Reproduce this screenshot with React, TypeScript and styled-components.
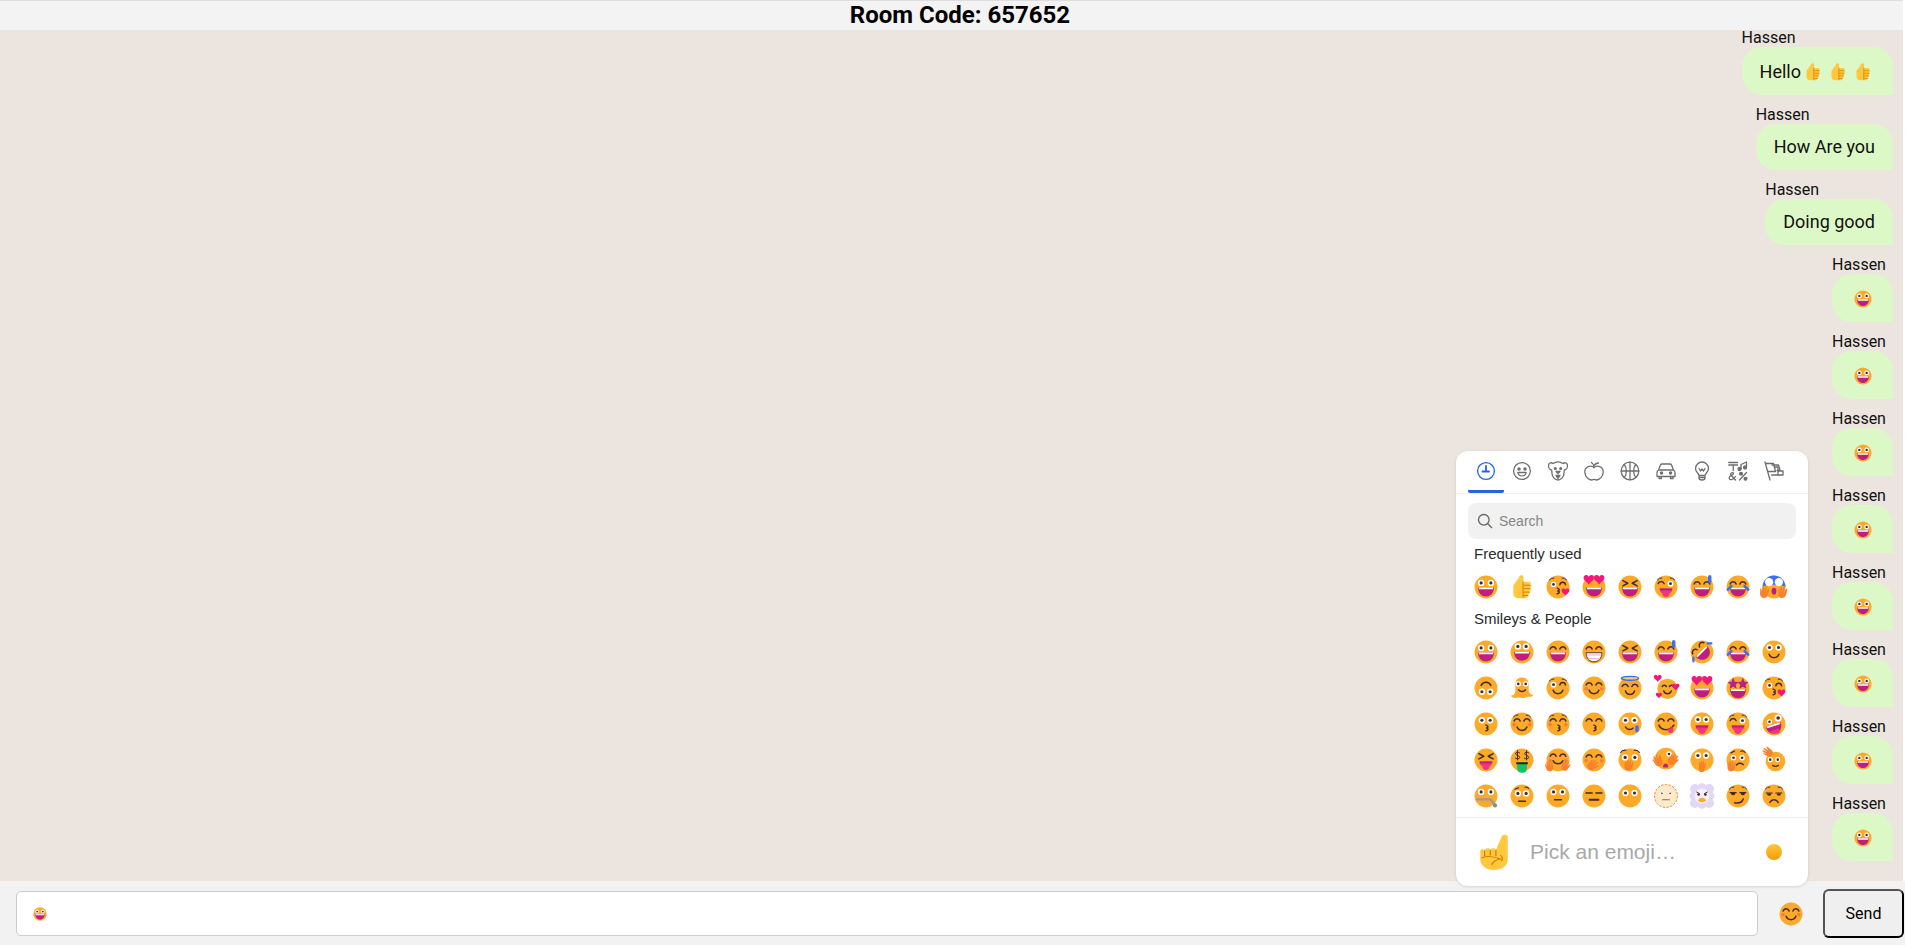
import React from "react";
import styled, { createGlobalStyle } from "styled-components";

const Global = createGlobalStyle`
  html, body { margin: 0; padding: 0; background: #fff; overflow: hidden; }
  * { box-sizing: border-box; }
`;

const Page = styled.div`
  position: relative;
  width: 1905px;
  height: 945px;
  display: flex;
  flex-direction: column;
  overflow: hidden;
  font-family: Roboto, "Liberation Sans", sans-serif;
`;
const Header = styled.header`
  position: relative;
  z-index: 1;
  flex: 0 0 30px;
  margin-right: 2px;
  background: #f3f3f3;
  border-top: 1px solid #dedede;
  padding-left: 17px;
  text-align: center;
  font-size: 24px;
  line-height: 29px;
  font-weight: 700;
  color: #000;
`;
const Chat = styled.main`
  flex: 1;
  min-height: 0;
  margin-right: 2px;
  background: #ece5df;
  padding-right: 10px;
  display: flex;
  flex-direction: column;
  align-items: flex-end;
`;
const Messages = styled.div`
  margin-top: -2px;
  display: flex;
  flex-direction: column;
  align-items: flex-end;
  gap: 10px;
`;
const Message = styled.div`
  display: flex;
  flex-direction: column;
  align-items: flex-start;
`;
const Sender = styled.div`
  font-size: 16px;
  line-height: 19px;
  color: #111;
`;
const Bubble = styled.div`
  background: #dcf8c6;
  border-radius: 20px 20px 0 20px;
  padding: 12px 18px;
  font-size: 18px;
  line-height: 22px;
  color: #111;
  display: flex;
  align-items: center;
`;
const BubbleText = styled.span<{ $withEmoji: boolean }>`
  padding-top: ${p => (p.$withEmoji ? "2px" : "0")};
  margin-right: ${p => (p.$withEmoji ? "-1px" : "0")};
`;
const InlineEmoji = styled.span`
  display: inline-flex;
  width: 18px;
  height: 24px;
  align-items: center;
  margin: 0 3.5px;
  padding-top: 1px;
`;
const Footer = styled.footer`
  flex: 0 0 64px;
  background: #f2f2f2;
  display: flex;
  align-items: center;
  padding-left: 16px;
`;
const InputBox = styled.div`
  flex: 1;
  height: 45px;
  background: #fff;
  border: 1px solid #ccc;
  border-radius: 5px;
  padding: 1px 0 0 16px;
  display: flex;
  align-items: center;
`;
const SmileButton = styled.div`
  width: 24px;
  height: 24px;
  margin: 2px 20px 0 21px;
`;
const SendButton = styled.button`
  width: 81px;
  height: 49px;
  margin-right: 1px;
  background: #efefef;
  border: 2px outset #000;
  border-radius: 6px;
  font-family: Roboto, sans-serif;
  font-size: 16px;
  color: #000;
`;

/* picker */
const Picker = styled.aside`
  position: absolute;
  left: 1456px;
  top: 451px;
  width: 352px;
  height: 435px;
  background: #fff;
  border-radius: 12px;
  box-shadow: 0 1px 3px rgba(0,0,0,.13);
  display: flex;
  flex-direction: column;
  font-family: "Liberation Sans", Arial, sans-serif;
  z-index: 2;
`;
const Tabs = styled.nav`
  height: 43px;
  flex: none;
  display: flex;
  padding: 0 12px;
  border-bottom: 1px solid #f1f1f1;
`;
const Tab = styled.div<{ $active?: boolean }>`
  width: 36px;
  height: 42px;
  display: flex;
  align-items: center;
  justify-content: center;
  padding-top: 1px;
  border-bottom: 3px solid ${p => (p.$active ? "#2264e5" : "transparent")};
  border-radius: 0 0 2px 2px;
  color: ${p => (p.$active ? "#2264e5" : "#6e6e6e")};
`;
const Search = styled.div`
  flex: none;
  margin: 9px 12px 0;
  height: 36px;
  background: #f1f1f1;
  border-radius: 8px;
  display: flex;
  align-items: center;
  gap: 6px;
  padding-left: 9px;
  font-size: 14px;
  color: #868686;
`;
const List = styled.div`
  flex: 1;
  padding: 1px 0 0 12px;
  overflow: hidden;
`;
const Label = styled.div`
  height: 29px;
  line-height: 28px;
  padding-left: 6px;
  font-size: 15px;
  color: #2b2b2b;
`;
const Grid = styled.div`
  display: grid;
  grid-template-columns: repeat(9, 36px);
  grid-auto-rows: 36px;
  place-items: center;
`;
const Preview = styled.div`
  flex: none;
  height: 69px;
  border-top: 1px solid #f1f1f1;
  display: flex;
  align-items: center;
  padding-left: 23px;
`;
const PreviewText = styled.div`
  margin-left: 21px;
  width: 236px;
  font-size: 21px;
  color: #a8a8a8;
`;
const ToneDot = styled.div`
  width: 16px;
  height: 16px;
  border-radius: 50%;
  background: linear-gradient(#ffc83d, #f59b08);
`;

/* emoji drawing */
const DK = "#402a32";
const Face = () => <circle cx="16" cy="16" r="15.3" fill="#fdaa29" />;
const Eye = ({ x, y = 10.5, r = 3.5, c }: { x: number; y?: number; r?: number; c?: string }) => (
  <g><circle cx={x} cy={y} r={r * 1.2} fill="#fff" /><circle cx={x} cy={y} r={r * 0.6} fill={c || DK} /></g>
);
const Eyes = ({ y = 10.5, r = 3.5, dx = 6.5 }: { y?: number; r?: number; dx?: number }) => (
  <g><Eye x={16 - dx} y={y} r={r} /><Eye x={16 + dx} y={y} r={r} /></g>
);
const S = ({ d, w = 2, c = DK }: { d: string; w?: number; c?: string }) => (
  <path d={d} fill="none" stroke={c} strokeWidth={w} strokeLinecap="round" strokeLinejoin="round" />
);
const Arc = ({ x, y = 12 }: { x: number; y?: number }) => <S d={`M${x - 4} ${y}a4.2 4.2 0 0 1 8 0`} />;
const Arcs = ({ y = 12 }: { y?: number }) => <g><Arc x={9.5} y={y} /><Arc x={22.5} y={y} /></g>;
const XEyes = () => <g><S d="M6.5 7.5l6.5 3.5-6.5 3.5" /><S d="M25.5 7.5l-6.5 3.5 6.5 3.5" /></g>;
const Open = ({ y = 16.5 }: { y?: number }) => (
  <g>
    <path d={`M5.5 ${y}H26.5C26.5 ${y + 8} 21.5 ${y + 12} 16 ${y + 12}S5.5 ${y + 8} 5.5 ${y}Z`} fill="#bc1f80" />
    <path d={`M6.4 ${y}H25.6L25.2 ${y + 2.4}H6.8Z`} fill="#fff" />
  </g>
);
const Smile = () => <S d="M9.5 19C12 25 20 25 22.5 19" />;
const Flat = ({ y = 22 }: { y?: number }) => <S d={`M11.5 ${y}H20.5`} w={2.2} />;
const Tongue = ({ x = 16, y = 18, r = 0 }: { x?: number; y?: number; r?: number }) => (
  <g transform={`rotate(${r} ${x} ${y})`}>
    <path d={`M${x - 8.5} ${y}H${x + 8.5}C${x + 8} ${y + 5} ${x + 6} ${y + 6} ${x + 5} ${y + 6}C${x + 5} ${y + 13} ${x - 5} ${y + 13} ${x - 5} ${y + 6}C${x - 6} ${y + 6} ${x - 8} ${y + 5} ${x - 8.5} ${y}Z`} fill="#f5337e" />
    <path d={`M${x - 8.5} ${y}H${x + 8.5}L${x + 8} ${y + 2.5}H${x - 8}Z`} fill="#bc1f80" />
  </g>
);
const Pucker = () => <S d="M16 17.5c3.4 1 3.4 3.2 .8 3.8 2.6.6 2.6 3.2-.8 3.8" />;
const Heart = ({ x, y, s = 1, c = "#f8137f" }: { x: number; y: number; s?: number; c?: string }) => (
  <path transform={`translate(${x} ${y}) scale(${s})`} d="M0 3.6C-1.5 1-5.5-.6-5.5-3.6-5.5-6.8-1.2-7.2 0-4.4 1.2-7.2 5.5-6.8 5.5-3.6 5.5-.6 1.5 1 0 3.6Z" fill={c} />
);
const Blush = () => <g fill="#f4743c" opacity=".85"><circle cx="5.5" cy="17" r="2.4" /><circle cx="26.5" cy="17" r="2.4" /></g>;
const Brows = () => <S d="M4.5 6.5a6 6 0 0 1 6-2.5M21.5 4a6 6 0 0 1 6 2.5" w={1.3} />;
const Hand = ({ x, y, r = 0, s = 1 }: { x: number; y: number; r?: number; s?: number }) => (
  <path transform={`translate(${x} ${y}) rotate(${r}) scale(${s})`} d="M-5 2V-4C-5-5-3.6-5-3.6-4V-1L-2.6-6C-2.4-7-1-7-1-6V-1.5L.4-6.4C.7-7.3 2-7 1.9-6L1-1 3-4C3.6-4.8 4.8-4.2 4.4-3.3L3 2C2 6-3.6 6.4-5 2Z" fill="#f9812c" />
);
const Thumb = () => (
  <g transform="translate(-6 -2.5) scale(1.3 1.15)">
    <path d="M8 14L13.5 6C14 3 15.5 2 17 2.5 19 3.2 18.8 6 18 10H24C26 10 26.5 12 25.5 13 27 14 26.8 16 25.4 17 26.6 18.4 26 20 24.8 20.6 25.6 22.2 25 24 23.6 24.4 24 26.6 22.5 29 20 29H13C10 29 8 27 8 24Z" fill="#ffc83d" />
    <S d="M18.5 14H25M18.5 18H25M18.5 22H24.5M18.5 26H23M18 10V28" w={1} c="#d67d00" />
  </g>
);

const E: Record<string, React.ReactNode> = {
  grin: <><Face /><Eyes /><Open /></>,
  smiley: <><Face /><Eyes y={8.5} r={3.6} dx={5.5} /><Open y={15.5} /></>,
  smileEyes: <><Face /><Arcs /><Open /></>,
  beam: <><Face /><Arcs /><path d="M5.5 17H26.5C26.5 25 21.5 29 16 29S5.5 25 5.5 17Z" fill="#fff" stroke={DK} strokeWidth="1.2" /><path d="M6 20H26M8 25H24" stroke="#e9a6c8" strokeWidth="1.3" /></>,
  squint: <><Face /><XEyes /><Open /></>,
  sweat: <><Face /><Arcs /><Open /><rect x="24" y="0" width="4.6" height="10.5" rx="2.3" fill="#3f6ff0" /></>,
  rofl: <><Face /><g transform="rotate(-45 16 16)"><Arcs y={9} /><Open y={14.5} /></g><rect x="22" y="3" width="8" height="3" rx="1.5" fill="#3f6ff0" /><rect x="3" y="22" width="3" height="8" rx="1.5" fill="#3f6ff0" /></>,
  joy: <><Face /><Arcs /><Open /><path d="M2.5 19.5L7 15M29.5 19.5L25 15" stroke="#3f6ff0" strokeWidth="3.6" strokeLinecap="round" /></>,
  slight: <><Face /><Eyes y={10} dx={6} /><Smile /></>,
  upside: <><Face /><S d="M9.5 12.5C12 7 20 7 22.5 12.5" /><Eyes y={21} dx={5.5} /></>,
  melt: <><path d="M6 24C8 20 7 14 7 12 7 5 11 2 16 2S25 5 25 12C25 17 24 20 27 24 30 25 32.5 26 30 27 26 28.5 24 27 20 29 16 30.5 13 28 9 29 5 30-.5 27 2 26 4 25.5 5 25 6 24Z" fill="#fdaa29" /><Eyes y={10.5} r={3} dx={5} /><S d="M11.5 18.5C14 21.5 18 21.5 20.5 18.5" /></>,
  wink: <><Face /><Eye x={10} y={11.5} r={3.2} /><S d="M18.5 12a3.8 3.8 0 0 1 7.5 0" /><Brows /><Smile /></>,
  blush: <><Face /><Blush /><Arcs /><Smile /></>,
  halo: <><Face /><Arcs y={14} /><S d="M10 20C12 26 20 26 22 20" /><ellipse cx="16" cy="3" rx="11.5" ry="2.6" fill="#fdcc6a" stroke="#2f6ff0" strokeWidth="1.8" /></>,
  hearts: <><circle cx="18" cy="17" r="13.5" fill="#fdaa29" /><S d="M11 14a3.2 3.2 0 0 1 5.5 0M20.5 14a3.2 3.2 0 0 1 5.5 0" /><S d="M13 20C15 25 21 25 23 20" /><Heart x={5} y={4.5} s={.95} /><Heart x={29} y={16} s={.9} /><Heart x={6.5} y={27} s={.75} /></>,
  heartEyes: <><Face /><Heart x={9} y={8} s={1.25} /><Heart x={23} y={8} s={1.25} /><Open /></>,
  star: <><Face /><path d="M9.5 2L11.8 7.5 17 8 13 11.8 14.2 17 9.5 14.2 4.8 17 6 11.8 2 8 7.2 7.5Z" fill="#b3257e" /><path d="M22.5 2L24.8 7.5 30 8 26 11.8 27.2 17 22.5 14.2 17.8 17 19 11.8 15 8 20.2 7.5Z" fill="#b3257e" /><Open y={17.5} /></>,
  kissHeart: <><Face /><Eye x={10} y={12.5} r={3} /><S d="M18.5 13a3.8 3.8 0 0 1 7.5 0" /><S d="M15 17.5c3.4 1 3.4 3.2 .8 3.8 2.6.6 2.6 3.2-.8 3.8" /><Brows /><Heart x={26} y={24} s={.95} /></>,
  kiss: <><Face /><Eyes y={11} dx={5.5} /><Pucker /></>,
  relaxed: <><Face /><Blush /><Arcs /><S d="M9.5 20C12 26 20 26 22.5 20" /><Brows /></>,
  kissClosed: <><Face /><Blush /><Arcs /><Pucker /><Brows /></>,
  kissFlat: <><Face /><Arcs /><Pucker /></>,
  tear: <><Face /><Eyes y={11} dx={6} /><S d="M10 20C12 24 18 24 20 21.5" /><rect x="23" y="17.5" width="4.6" height="9.5" rx="2.3" fill="#3f6ff0" /></>,
  yum: <><Face /><Arcs /><S d="M6.5 17.5C10 25 20 26 26.5 17.5" /><path d="M18 23C20 22.5 22 21.5 23.5 20 27.5 22 26 29 21.5 28 19.5 27.7 18.5 25.5 18 23Z" fill="#f5337e" /></>,
  tongue: <><Face /><Eyes y={10} dx={5.5} /><Tongue /></>,
  winkTongue: <><Face /><Arc x={9.5} y={11.5} /><Eye x={22} y={11.5} r={3.2} /><Brows /><Tongue /></>,
  zany: <><Face /><Eye x={10} y={13} r={2.8} /><Eye x={21.5} y={8} r={4} /><g transform="rotate(-18 16 20)"><Open y={16.5} /></g><path d="M10 26L22 22 24 27C20 30 14 30 10 26Z" fill="#f5337e" /></>,
  squintTongue: <><Face /><XEyes /><Tongue /></>,
  money: <><Face /><S d="M13 6.5C12 5 7.5 5 7.5 7.5S13 10 13 12.5 8 15 7 13.5M10 3.5V16" w={1.3} /><S d="M25 6.5C24 5 19.5 5 19.5 7.5S25 10 25 12.5 20 15 19 13.5M22 3.5V16" w={1.3} /><path d="M9.5 19.5H22.5V27C22.5 32 19 33 16 33S9.5 32 9.5 27Z" fill="#10c46a" /><path d="M8 19H24L23.5 21.5H8.5Z" fill="#1c2a24" /></>,
  hug: <><Face /><Blush /><Arcs y={11} /><S d="M9.5 17C12 22.5 20 22.5 22.5 17" /><Hand x={5.5} y={25} r={-20} s={1.15} /><Hand x={26.5} y={25} r={20} s={1.15} /></>,
  handMouth: <><Face /><Blush /><Arcs /><Hand x={14} y={24} r={45} s={1.3} /></>,
  peek: <><Face /><Eyes y={12.5} dx={6.5} /><S d="M3.5 6a7 7 0 0 1 7-3M21.5 3a7 7 0 0 1 7 3" w={1.5} /><Hand x={15} y={24} r={5} s={1.25} /></>,
  cover: <><circle cx="16" cy="14" r="14.5" fill="#fdaa29" /><Eye x={20} y={8} r={3} /><path d="M12.5 26a3.5 3.5 0 1 1 6 0Z" fill="#bc1f80" /><Hand x={6.5} y={17} r={-35} s={1.3} /><Hand x={25.5} y={17} r={35} s={1.3} /></>,
  shush: <><Face /><Eyes y={10} dx={5.5} /><rect x="12" y="19" width="7" height="13" rx="3.5" fill="#f9812c" /><Hand x={17} y={24} s={1} /></>,
  think: <><Face /><Eye x={10} y={13} r={3} /><Eye x={21.5} y={13} r={3} /><S d="M6.5 6.5L11.5 4M19.5 4.5a4.5 4.5 0 0 1 6 1.5" w={1.5} /><S d="M14 22.5C16.5 20 20 20 23 22" /><Hand x={8} y={25} s={1.2} /></>,
  salute: <><circle cx="18" cy="18" r="13" fill="#fdaa29" /><Eyes y={15.5} r={2.8} dx={5} /><S d="M14 23C16 25 20 25 22 23" w={1.5} /><Hand x={9} y={5} r={-65} s={1.2} /></>,
  zipper: <><Face /><Eyes y={10.5} /><S d="M4 20.5H22L27 27" w={3.2} c="#9a9a9a" /><circle cx="28" cy="28.5" r="2.8" fill="#8a8a8a" /></>,
  brow: <><Face /><Eyes y={12.5} dx={5.5} /><S d="M6.5 7L11.5 5M20 4.5a4.5 4.5 0 0 1 5 1.5" w={1.4} /><Flat y={23} /></>,
  neutral: <><Face /><Eyes y={10.5} dx={6} /><Flat y={21} /></>,
  express: <><Face /><S d="M5.5 12H13.5M18.5 12H26.5" w={2.2} /><S d="M10 21H22" w={2.4} /></>,
  noMouth: <><Face /><Eyes y={12} dx={6} /></>,
  dotted: <><circle cx="16" cy="16" r="15.3" fill="#ffe9c6" stroke="#d98236" strokeWidth="1.2" strokeDasharray="3.2 1.8" /><Eye x={10.5} y={12.5} r={1.8} /><Eye x={21.5} y={12.5} r={1.8} /><S d="M11.5 21H20.5" w={1.5} c="#8c6a50" /></>,
  clouds: <><g fill="#e2d8f6"><circle cx="6.5" cy="6.5" r="6.5" /><circle cx="16" cy="5" r="6" /><circle cx="25.5" cy="6.5" r="6.5" /><circle cx="5.5" cy="16" r="6" /><circle cx="26.5" cy="16" r="6" /><circle cx="6.5" cy="25.5" r="6.5" /><circle cx="16" cy="27" r="6" /><circle cx="25.5" cy="25.5" r="6.5" /></g><circle cx="16" cy="16" r="10" fill="#f5f0fb" /><path d="M8.5 10.5L13 13M23.5 10.5L19 13" stroke={DK} strokeWidth="1.3" /><circle cx="11.5" cy="14" r="1.8" fill={DK} /><circle cx="20.5" cy="14" r="1.8" fill={DK} /><path d="M10.5 22C13 17 19 17 21.5 22 19 25 13 25 10.5 22Z" fill="#fdaa29" /></>,
  smirk: <><Face /><S d="M5.5 11.5H13.5M18.5 11.5H26.5" w={1.6} /><path d="M6.5 12h6a3 3 0 0 1-6 0ZM19.5 12h6a3 3 0 0 1-6 0Z" fill={DK} /><Brows /><S d="M11.5 25C17 26 21.5 24.5 23 20" /></>,
  unamused: <><Face /><S d="M5.5 12H13.5M18.5 12H26.5" w={1.6} /><path d="M6.5 12.5h6a3 3 0 0 1-6 0ZM19.5 12.5h6a3 3 0 0 1-6 0Z" fill={DK} /><Brows /><S d="M10.5 24.5C13 20 19 20 21.5 24.5" /></>,
  scream: <><Face /><path d="M.7 16A15.3 15.3 0 0 1 31.3 16C27 12 5 12 .7 16Z" fill="#3f6ff0" /><circle cx="9.5" cy="9.5" r="5.5" fill="#fff" /><circle cx="22.5" cy="9.5" r="5.5" fill="#fff" /><ellipse cx="16" cy="21.5" rx="3.2" ry="4.5" fill="#bc1f80" /><Hand x={4} y={24} s={1.3} /><Hand x={28} y={24} s={1.3} /></>,
  thumb: <Thumb />,
};

const Em = ({ name, size = 24 }: { name: string; size?: number }) => (
  <svg width={size} height={size} viewBox="0 0 32 32" style={{ display: "block", overflow: "visible" }}>{E[name]}</svg>
);

const frequent = ["grin", "thumb", "kissHeart", "heartEyes", "squint", "winkTongue", "sweat", "joy", "scream"];
const smileys = [
  "grin", "smiley", "smileEyes", "beam", "squint", "sweat", "rofl", "joy", "slight",
  "upside", "melt", "wink", "blush", "halo", "hearts", "heartEyes", "star", "kissHeart",
  "kiss", "relaxed", "kissClosed", "kissFlat", "tear", "yum", "tongue", "winkTongue", "zany",
  "squintTongue", "money", "hug", "handMouth", "peek", "cover", "shush", "think", "salute",
  "zipper", "brow", "neutral", "express", "noMouth", "dotted", "clouds", "smirk", "unamused",
];

const IconSvg = styled.svg.attrs({ width: 20, height: 20, viewBox: "0 0 20 20", fill: "none", stroke: "currentColor", strokeWidth: 1.3, strokeLinecap: "round", strokeLinejoin: "round" })`
  display: block;
`;
const tabIcons: React.ReactNode[] = [
  <IconSvg key="0" strokeWidth={1.5}><circle cx="10" cy="10" r="8.4" /><path d="M10 5V10.5M6.5 10.5H13" strokeWidth={1.8} /></IconSvg>,
  <IconSvg key="1"><circle cx="10" cy="10" r="8.4" /><circle cx="7" cy="8" r="1.1" fill="currentColor" /><circle cx="13" cy="8" r="1.1" fill="currentColor" /><path d="M5.8 11.5H14.2C13.5 16 6.5 16 5.8 11.5Z" /></IconSvg>,
  <IconSvg key="2"><path d="M5 2.5C3 1 .5 2 .5 4.5 .5 7 2 9 3.7 9L4 12.5C4 15.5 7 19 10 19S16 15.5 16 12.5L16.3 9C18 9 19.5 7 19.5 4.5 19.5 2 17 1 15 2.5 12 .5 8 .5 5 2.5Z" /><circle cx="7.3" cy="7.5" r=".9" fill="currentColor" /><circle cx="12.7" cy="7.5" r=".9" fill="currentColor" /><path d="M8 10.5H12L10 12.5ZM8 14.5H12L10 17.5Z" fill="currentColor" /></IconSvg>,
  <IconSvg key="3"><path d="M10 6.5C7 4 .8 5 .8 11 .8 15.5 4.5 19 7.5 19 9 19 9 18.4 10 18.4S11 19 12.500 19C15.5 19 19.200 15.5 19.200 11 19.200 5 13 4 10 6.5Z" /><path d="M10 6.5C10 4 9 2.5 7.5 1.5M10 5C11 3 13 2 14.5 2" /></IconSvg>,
  <IconSvg key="4" strokeWidth={1.4}><circle cx="10" cy="10" r="8.8" /><path d="M10 1.2V18.8M1.2 10H18.8M4.2 3.5C7 6.5 7 13.5 4.2 16.5M15.8 3.5C13 6.5 13 13.5 15.8 16.5" /></IconSvg>,
  <IconSvg key="5" strokeWidth={1.4}><path d="M2.5 9L4.5 4C4.8 3.2 5.5 3 6.3 3H13.7C14.5 3 15.2 3.2 15.5 4L17.5 9C18.5 9.5 19 10.5 19 11.5V15.5H1V11.5C1 10.5 1.5 9.5 2.5 9ZM2.5 9H17.5M3 15.5V17.5H5.5V15.5M14.5 15.5V17.5H17V15.5" /><circle cx="5.5" cy="12" r="1.1" fill="currentColor" /><circle cx="14.5" cy="12" r="1.1" fill="currentColor" /></IconSvg>,
  <IconSvg key="6"><path d="M7 14.5C7 12.5 3.5 11 3.5 7.5 3.5 4 6.5 1 10 1S16.5 4 16.5 7.5C16.5 11 13 12.5 13 14.5ZM7 14.5V17C7 18 8 19 10 19S13 18 13 17V14.5M7 16.5H13M7 7.5L8.5 10 10 8 11.5 10 13 7.5" /></IconSvg>,
  <IconSvg key="7" strokeWidth={1.6}><path d="M.8 1.5H9.5M.8 4H9.5M5.2 4V9.5" /><path d="M13 8V3.5L18.5 1V6" /><circle cx="11.5" cy="8" r="1.5" fill="currentColor" /><circle cx="17" cy="6.5" r="1.5" fill="currentColor" /><path d="M7.5 19L3 14C1.5 12 5.5 10.5 5.5 12.5 5.5 14 1.2 14.5 1.2 16.8 1.2 19.5 5 19.5 7.5 15.5" /><path d="M18.5 11.5L11.5 19" /><circle cx="13" cy="12.8" r="1.4" fill="currentColor" /><circle cx="17.5" cy="17.8" r="1.4" fill="currentColor" /></IconSvg>,
  <IconSvg key="8" strokeWidth={1.1}><path d="M1 1L6 19M1.5 2.5H9.5L11.5 10.5H4" /><path d="M8 4H14.5L16 9.5H13" /><path d="M11 6H14V14H7.5" /><path d="M14 10H19V14H14" /></IconSvg>,
];

const Msg = ({ text, count = 0 }: { text?: string; count?: number }) => (
  <Message>
    <Sender>Hassen</Sender>
    <Bubble>
      {text && <BubbleText $withEmoji={count > 0}>{text}</BubbleText>}
      {Array.from({ length: count }).map((_, i) => (
        <InlineEmoji key={i}><Em name={text ? "thumb" : "grin"} size={18} /></InlineEmoji>
      ))}
    </Bubble>
  </Message>
);

export default function App() {
  return (
    <Page>
      <Global />
      <Header>Room Code: 657652</Header>
      <Chat>
        <Messages>
          <Msg text="Hello" count={3} />
          <Msg text="How Are you" />
          <Msg text="Doing good" />
          {Array.from({ length: 8 }).map((_, i) => <Msg key={i} count={1} />)}
        </Messages>
      </Chat>
      <Footer>
        <InputBox><Em name="grin" size={14} /></InputBox>
        <SmileButton><Em name="blush" size={24} /></SmileButton>
        <SendButton>Send</SendButton>
      </Footer>
      <Picker>
        <Tabs>{tabIcons.map((ic, i) => <Tab key={i} $active={i === 0}>{ic}</Tab>)}</Tabs>
        <Search>
          <svg width="16" height="16" viewBox="0 0 16 16" fill="none" stroke="#666" strokeWidth="1.3"><circle cx="6.8" cy="6.8" r="5.3" /><path d="M10.8 10.8L15 15" /></svg>
          Search
        </Search>
        <List>
          <Label>Frequently used</Label>
          <Grid>{frequent.map((n, i) => <Em key={i} name={n} />)}</Grid>
          <Label>Smileys &amp; People</Label>
          <Grid>{smileys.map((n, i) => <Em key={i} name={n} />)}</Grid>
        </List>
        <Preview>
          <svg width="30" height="38" viewBox="2 0 24 38" preserveAspectRatio="none">
            <path d="M3 18C3 16 6 15.5 6.5 17.5 7 15 10.5 14.5 11 17 11.5 14.5 15 14.5 15.5 17L20 4C20.5 1 25 1 25 4V27C25 33 20 37 14 37 8 37 3.5 33 3 27Z" fill="#ffc83d" />
            <path d="M6.5 17.5V23M11 17V22.5M15.5 17V23M4 25C8 23 14 23 19 26 15 27 13 29 12 32M19 22C21 24 21 26 20 28" fill="none" stroke="#d67d00" strokeWidth="1" />
          </svg>
          <PreviewText>Pick an emoji…</PreviewText>
          <ToneDot />
        </Preview>
      </Picker>
    </Page>
  );
}
